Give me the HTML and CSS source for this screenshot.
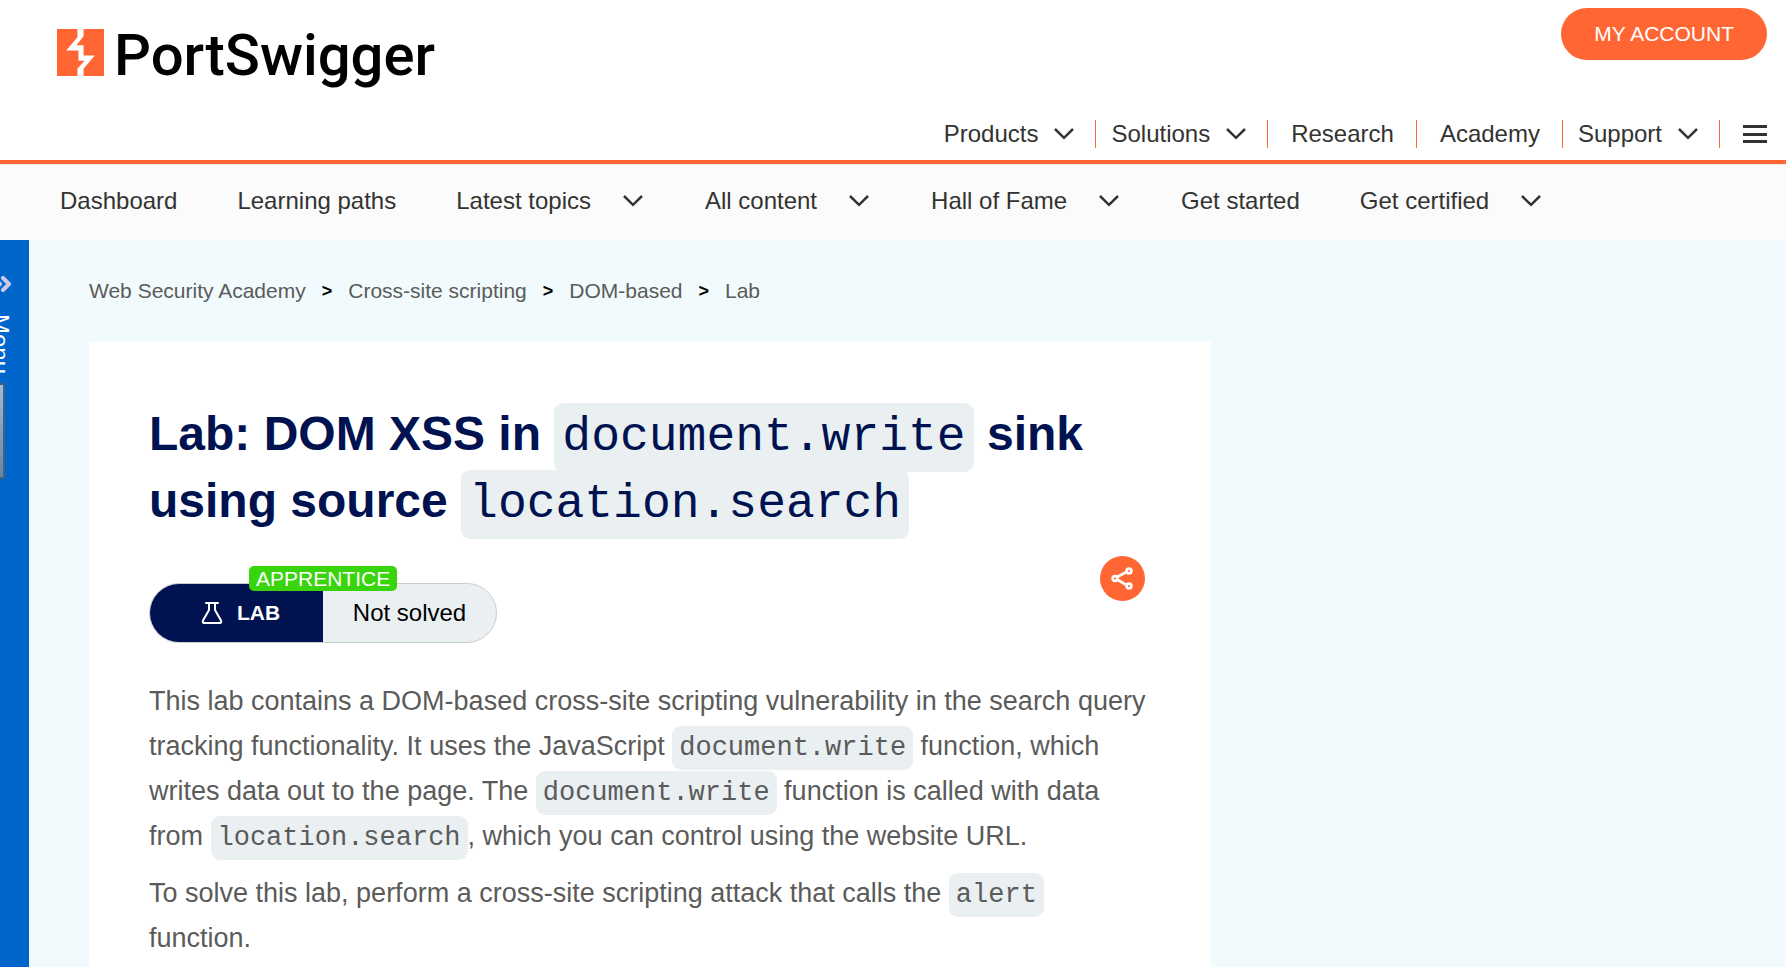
FILE: index.html
```
<!DOCTYPE html>
<html lang="en">
<head>
<meta charset="utf-8">
<title>Lab: DOM XSS in document.write sink using source location.search | Web Security Academy</title>
<link rel="stylesheet" href="styles.css">
</head>
<body>
<svg class="defs" aria-hidden="true">
  <symbol id="chevron" viewBox="0 0 20 12"><path d="M1 1 10 9.800 19 1" fill="none" stroke="currentColor" stroke-width="2.500"/></symbol>
</svg>
<header class="site-header">
  <div class="header-top">
    <a class="logo" href="#">
      <svg class="logo-mark" viewBox="0 0 46 46" aria-hidden="true"><path fill="#ff6633" d="M0 0h46v46H0z"/><path fill="#fff" d="M20 0h6v7l-7 9h7v10h11L26 39v7h-6v-7l7-8h-6V21H9L20 8z"/></svg>
      <span class="logo-text">PortSwigger</span>
    </a>
    <a class="account" href="#">MY ACCOUNT</a>
  </div>
  <nav class="main-nav" aria-label="Main">
    <button class="nav-drop">Products<svg class="chev"><use href="#chevron"/></svg></button>
    <button class="nav-drop">Solutions<svg class="chev"><use href="#chevron"/></svg></button>
    <a class="nav-link" href="#">Research</a>
    <a class="nav-link" href="#">Academy</a>
    <button class="nav-drop">Support<svg class="chev"><use href="#chevron"/></svg></button>
    <button class="burger" aria-label="More"><svg viewBox="0 0 24 18"><path d="M0 1.500h24M0 9.500h24M0 16.500h24" stroke="currentColor" stroke-width="3"/></svg></button>
  </nav>
</header>
<nav class="sub-nav" aria-label="Academy">
  <a href="#">Dashboard</a>
  <a href="#">Learning paths</a>
  <button>Latest topics<svg class="chev"><use href="#chevron"/></svg></button>
  <button>All content<svg class="chev"><use href="#chevron"/></svg></button>
  <button>Hall of Fame<svg class="chev"><use href="#chevron"/></svg></button>
  <a href="#">Get started</a>
  <button>Get certified<svg class="chev"><use href="#chevron"/></svg></button>
</nav>
<div class="page">
  <aside class="side">
    <button class="side-toggle">
      <svg class="side-arrows" viewBox="0 0 20 16" aria-hidden="true"><path d="M2 2l6 6-6 6M11 2l6 6-6 6" fill="none" stroke="currentColor" stroke-width="4" stroke-linecap="round" stroke-linejoin="round"/></svg>
      <span class="side-label">Menu</span>
    </button>
    <div class="side-thumb"></div>
  </aside>
  <main class="main">
    <nav class="crumbs" aria-label="Breadcrumb">
      <a href="#">Web Security Academy</a><span>&gt;</span>
      <a href="#">Cross-site scripting</a><span>&gt;</span>
      <a href="#">DOM-based</a><span>&gt;</span>
      <a href="#">Lab</a>
    </nav>
    <article class="card">
      <h1>Lab: DOM XSS in <code>document.write</code> sink using source <code>location.search</code></h1>
      <div class="status-row">
        <div class="status">
          <span class="status-lab"><svg class="flask" viewBox="0 0 22 24" aria-hidden="true"><path d="M5 2h12M8 2v7L2 19.500Q1 22 3.500 22h15Q21 22 20 19.500L14 9V2" fill="none" stroke="currentColor" stroke-width="2" stroke-linecap="round"/></svg>LAB</span>
          <span class="status-state">Not solved</span>
          <span class="level">APPRENTICE</span>
        </div>
        <button class="share" aria-label="Share"><svg viewBox="0 0 45 45"><g fill="none" stroke="#fff" stroke-width="2.600"><path d="M17 21 26.500 16M17 23.500 26.500 29"/><circle cx="15" cy="22.500" r="2.400"/><circle cx="29" cy="15" r="2.400"/><circle cx="29" cy="30" r="2.400"/></g></svg></button>
      </div>
      <p>This lab contains a DOM-based cross-site scripting vulnerability in the search query tracking functionality. It uses the JavaScript <code>document.write</code> function, which writes data out to the page. The <code>document.write</code> function is called with data from <code>location.search</code>, which you can control using the website URL.</p>
      <p>To solve this lab, perform a cross-site scripting attack that calls the <code>alert</code> function.</p>
    </article>
  </main>
</div>
</body>
</html>
```
FILE: styles.css
```
* { box-sizing: border-box; }
body {
  margin: 0;
  min-height: 100vh;
  display: flex;
  flex-direction: column;
  overflow: hidden;
  font-family: "Liberation Sans", Arial, sans-serif;
  font-size: 24px;
  color: #333332;
  background: #fff;
}
a { color: inherit; text-decoration: none; }
button { font: inherit; color: inherit; background: none; border: 0; padding: 0; cursor: pointer; }
.defs { display: none; }
.chev { width: 20px; height: 12px; flex: none; }

.site-header {
  padding: 8px 19px 12px 57px;
  border-bottom: 4px solid #ff6633;
}
.header-top { display: flex; justify-content: space-between; align-items: flex-start; height: 112px; }
.logo { display: flex; align-items: flex-start; gap: 10px; padding-top: 11px; color: #000; }
.logo-mark { width: 47px; height: 47px; margin-top: 10px; }
.logo-text { font-family: Roboto, sans-serif; font-weight: 500; font-size: 58px; line-height: 72px; }
.account {
  height: 52px;
  padding: 0 33px;
  border-radius: 26px;
  background: #ff6633;
  color: #fff;
  font-size: 21px;
  line-height: 52px;
}
.main-nav { display: flex; justify-content: flex-end; align-items: center; line-height: 28px; }
.main-nav > * + * { border-left: 1px solid #ff6633; }
.nav-drop { display: flex; align-items: center; gap: 16px; padding: 0 21px 0 15px; }
.nav-link { padding: 0 22px 0 23px; }
.burger { height: 28px; padding-left: 23px; display: flex; align-items: center; }
.burger svg { width: 24px; height: 18px; }

.sub-nav {
  height: 76px;
  padding: 0 60px 2px;
  display: flex;
  align-items: center;
  gap: 60px;
  background: #fbfbfb;
  box-shadow: inset 0 1px #ebebeb;
}
.sub-nav button { display: flex; align-items: center; gap: 32px; padding-right: 2px; }

.page { flex: 1; display: flex; background: #f1fafc; }
.side { width: 29px; flex: none; background: #0066cc; overflow: hidden; padding-top: 36px; }
.side-toggle { display: flex; flex-direction: column; align-items: flex-start; gap: 22px; margin-left: -8px; color: #fff; }
.side-arrows { width: 20px; height: 16px; color: #c9cbe6; }
.side-label { writing-mode: vertical-rl; line-height: 24px; margin-left: -4px; }
.side-thumb {
  width: 5px;
  height: 96px;
  margin-top: 9px;
  border: 2px solid #45607c;
  border-left: 0;
  background: linear-gradient(#9dbcd8, #6286a8);
}

.main { flex: 1; min-width: 0; padding: 38px 60px 0; display: flex; flex-direction: column; }
.crumbs { display: flex; align-items: center; gap: 16px; font-size: 21px; line-height: 26px; color: #5b5b5a; }
.crumbs span { color: #000; font-size: 18px; font-weight: 700; }
.card { flex: 1; max-width: 1122px; margin-top: 38px; padding: 58px 60px 0; background: #fff; }
h1 { margin: 0; font-size: 48px; line-height: 67px; color: #00124f; }
code {
  font-family: "Liberation Mono", "Courier New", monospace;
  font-size: 1em;
  font-weight: 400;
  line-height: 1;
  padding: 7px;
  border-radius: 9px;
  background: #eaeff2;
}
h1 code { padding: 7px 8px 8px; }
.status-row { display: flex; justify-content: space-between; align-items: flex-start; margin: 22px 6px 36px 0; }
.status {
  position: relative;
  display: flex;
  width: 348px;
  height: 60px;
  margin-top: 27px;
  border: 1px solid #c8cdd2;
  border-radius: 30px;
  background: #eaeff2;
  color: #000;
}
.status > span { display: flex; align-items: center; justify-content: center; }
.status .status-lab { width: 50%; gap: 14px; padding-left: 8px; border-radius: 30px 0 0 30px; background: #00124f; color: #fff; font-size: 21px; font-weight: 700; }
.status .status-state { width: 50%; }
.flask { width: 22px; height: 24px; }
.status .level {
  position: absolute;
  left: 99px;
  top: -18px;
  height: 25px;
  padding: 0 7px;
  border-radius: 5px;
  background: #38d40c;
  color: #fff;
  font-size: 21px;
}
.share { width: 45px; height: 45px; border-radius: 50%; background: #ff6633; }
.share svg { display: block; }
p { margin: 0 0 12px; font-size: 27px; line-height: 45px; color: #5b5b5a; }
```
